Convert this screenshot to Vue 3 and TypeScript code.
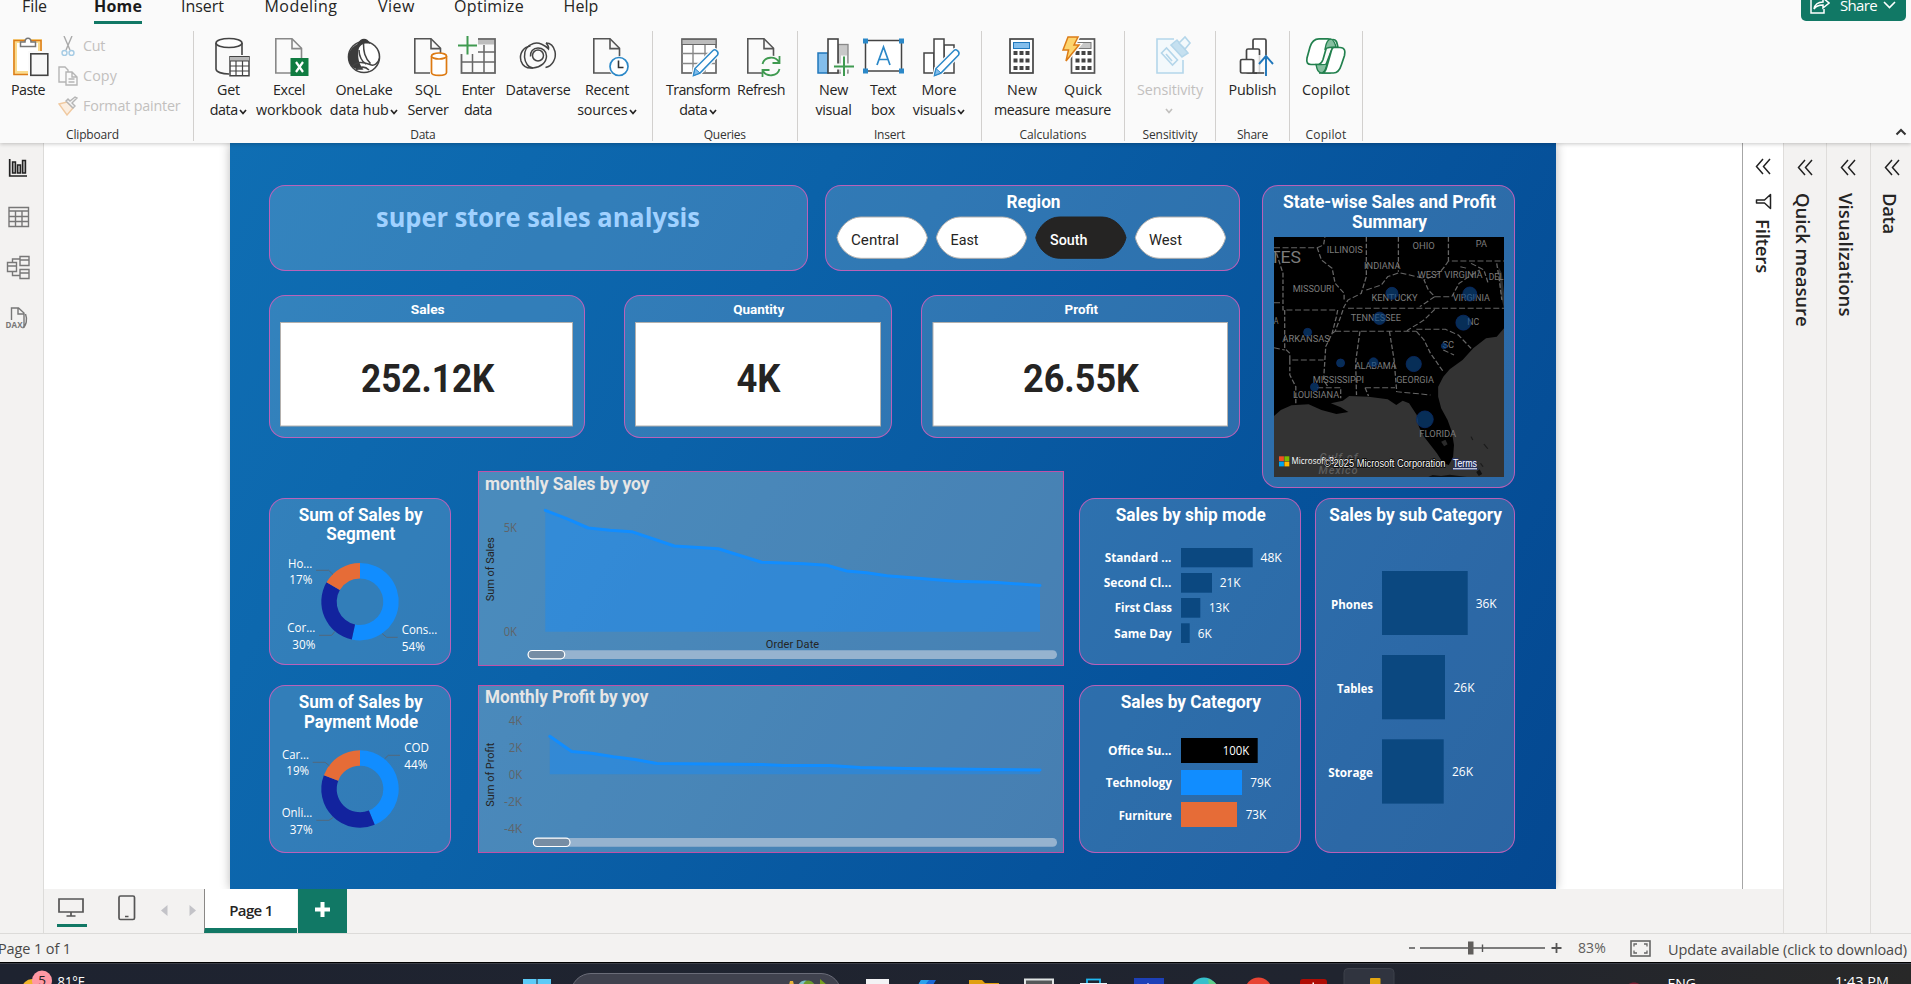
<script setup lang="ts">
import type { Directive } from 'vue'

interface Line { t: string; w: number; chev?: boolean }
interface Tool { icon: string; width: number; lines: Line[]; off?: boolean }
interface Group { name: string; nameW: number; width: number; pad: number; tools: Tool[] }
interface Txt { t: string; x: number; y: number; w: number }

/* Tracks a run of text so that it fills the given length in pixels. */
const vFit: Directive<HTMLElement, number> = {
  mounted(el, binding) {
    const box = el.getBoundingClientRect()
    const vertical = getComputedStyle(el).writingMode.startsWith('vertical')
    const size = vertical ? box.height : box.width
    const n = (el.textContent ?? '').trim().length
    if (n > 0 && size > 0) el.style.letterSpacing = `${((binding.value - size) / n).toFixed(3)}px`
  },
}

const page = '<path d="M6.8 2.8H23l9.5 9.5V37H6.8z" fill="#fafafa" stroke="#555" stroke-width="1.6"/><path d="M23 3v9.6h9.5" fill="none" stroke="#555" stroke-width="1.6"/>'
const pencil = '<path d="M35 14.5c2-2 6.5 1.5 4.5 4.5L22 37l-6.500 2.500 1.500-7z" fill="#fff" stroke="#fafafa" stroke-width="4"/><path d="M35 14.500c2-2 6.500 1.500 4.500 4.500L22 37l-6.500 2.500 1.500-7z" fill="#fff" stroke="#2b88c8" stroke-width="1.5"/><path d="M17 32.500l5 4.500-6.500 2.500z" fill="#83beec" stroke="#2b88c8"/>'
const keys = (x: number) => {
  let s = ''
  for (const dx of [0, 6, 12]) for (const dy of [15, 22.5, 30]) s += `<rect x="${x + dx}" y="${dy}" width="4" height="4" fill="#444"/>`
  return s
}
const icons: Record<string, string> = {
  paste: '<rect x="7" y="5" width="25" height="32" fill="#fff" stroke="#fadb8e" stroke-width="4"/><rect x="6" y="4.500" width="27" height="34" fill="none" stroke="#dc7c18" stroke-width="1.500"/><path d="M12.500 10.500V6H17c0-5 6-5 6 0h4.500v4.500z" fill="#fff" stroke="#777" stroke-width="1.500"/><rect x="20" y="15" width="22" height="26" fill="#fafafa"/><rect x="22.800" y="17.800" width="17" height="21.500" fill="#f8f8f8" stroke="#444" stroke-width="1.600"/>',
  getdata: '<path d="M7 7v26c0 3 6 5 13 5M33 7v12" fill="none" stroke="#444" stroke-width="1.600"/><ellipse cx="20" cy="7" rx="13" ry="4.500" fill="#fff" stroke="#444" stroke-width="1.600"/><path d="M21 20.800h19v19H21z" fill="#fff" stroke="#444" stroke-width="1.500"/><path d="M21 21h19v4H21z" fill="#b8b8b8"/><path d="M21 25h19M21 30h19M21 35h19M27 25v15M33.500 25v15" stroke="#444" stroke-width="1.200"/>',
  excel: page.split('#555').join('#888') + '<rect x="21.500" y="22" width="18" height="18" fill="#107c41"/><path d="M27 26l7 10M34 26l-7 10" stroke="#fff" stroke-width="2.200"/>',
  onelake: '<circle cx="20" cy="21" r="15.500" fill="#fff" stroke="#444" stroke-width="1.600"/><path d="M13.500 8c3-7 10-7 13 0-7-1.500-11 1-12 6-1 6 0 14 5 19.500-6 1-11-1-14-6.500-3-7 0-15 8-19z" fill="#3c3c3c"/><path d="M19.500 7.500c0 8 1 14 7 20M8 30.500c5-5 10-5 18-2 4 2 8-1 9.500-6M15 14c0 6 3 12 7 14M12 34c5-4 9-4 13 0" fill="none" stroke="#444" stroke-width="1.500"/>',
  sql: page + '<path d="M22 18h18v24H22z" fill="#fafafa"/><path d="M23.500 20v16.500c0 3.800 15 3.800 15 0V20" fill="#fff" stroke="#dd7a12" stroke-width="1.700"/><ellipse cx="31" cy="20" rx="7.500" ry="3" fill="#fff" stroke="#dd7a12" stroke-width="1.700"/>',
  enter: '<rect x="3.500" y="3" width="33.500" height="34" fill="#fafafa" stroke="#666" stroke-width="1.800"/><rect x="12" y="4" width="24" height="4.500" fill="#bdbdbd"/><path d="M3.500 16h34M3.500 26h34M14.500 14v23M26 9v28" stroke="#666" stroke-width="1.500"/><path d="M-1-1h21v19H-1z" fill="#fafafa"/><path d="M9.500 0v18.500M0 9.500h19" stroke="#3f9a50" stroke-width="2"/>',
  dataverse: '<g fill="none" stroke="#444" stroke-width="1.500"><path d="M12.500 10C5 11 1 18 3 25c2 6 7 7.500 12 7 8-1 13.500-5.500 13.500-12 0-5-4-8-8.500-8-5 0-8 4-7.500 8.500"/><path d="M27.500 31.500c7-1.500 11-9 9.500-16-1.500-6-5-8.500-9-8.500"/><path d="M28 7c2 2 3 4 2.500 6C27 9 21 6 15.500 7.500 9 9.500 6 15 6.500 21c.5 6 4 11 8.500 11"/><circle cx="20" cy="19.500" r="5.500"/></g>',
  recent: page + '<circle cx="32" cy="30.500" r="10.500" fill="#fafafa"/><circle cx="32" cy="30.500" r="9" fill="#fff" stroke="#2b88c8" stroke-width="1.700"/><path d="M31.500 24.500v7h5" fill="none" stroke="#333" stroke-width="1.600"/>',
  transform: '<rect x="4" y="3" width="34" height="34" fill="#fff" stroke="#666" stroke-width="1.700"/><rect x="4" y="3.500" width="34" height="5" fill="#bdbdbd" stroke="#666"/><path d="M4 17.500h34M4 27.500h34M15 9v28M27 9v28" stroke="#888" stroke-width="1.400"/>' + pencil,
  refresh: page + '<circle cx="30" cy="30.500" r="11" fill="#fafafa"/><path d="M21.500 28c2-8 13-8 16.500-2M38.500 20v7h-7M38.500 33c-2 8-13 8-16.500 2M21.500 41v-7h7" fill="none" stroke="#3f9a50" stroke-width="1.800"/>',
  newvisual: '<rect x="4" y="17" width="10" height="20" fill="#83beec" stroke="#2077bb" stroke-width="1.500"/><rect x="24" y="8.500" width="10" height="28.500" fill="#c8c8c8" stroke="#888" stroke-width="1.300"/><rect x="14" y="3" width="10" height="34" fill="#fff" stroke="#444" stroke-width="1.600"/><path d="M27 19.500h6v8h8v6h-8v8h-6v-8h-8v-6h8z" fill="#fafafa"/><path d="M30 20.500V40M20 30.500h20" stroke="#3f9a50" stroke-width="2"/>',
  textbox: '<rect x="2.500" y="4.500" width="36" height="30.500" fill="#fff" stroke="#444" stroke-width="1.500"/><path d="M0 2.500h5v5H0zM36 2.500h5v5h-5zM0 32.500h5v5H0zM36 32.500h5v5h-5z" fill="#2b88c8"/><path d="M14 29l6.500-18L27 29M16 23.500h9" fill="none" stroke="#2b88c8" stroke-width="1.700"/>',
  morevisuals: '<rect x="5" y="17" width="10" height="20" fill="#fff" stroke="#444" stroke-width="1.500"/><rect x="25" y="9" width="10" height="28" fill="#fff" stroke="#444" stroke-width="1.500"/><rect x="15" y="3" width="10" height="34" fill="#fff" stroke="#444" stroke-width="1.500"/>' + pencil,
  newmeasure: '<rect x="8" y="3" width="23" height="34" fill="#fff" stroke="#444" stroke-width="1.700"/><rect x="11.500" y="6.500" width="16" height="6" fill="#83beec" stroke="#2077bb"/>' + keys(11.5),
  quickmeasure: '<rect x="8.500" y="3" width="23" height="34" fill="#fff" stroke="#555" stroke-width="1.700"/><rect x="12" y="6.500" width="16" height="6" fill="#c8c8c8" stroke="#777"/>' + keys(12.5) + '<path d="M5 1h10l-4 8h5L3 25l2.500-11H0z" fill="#fdd56f" stroke="#fafafa" stroke-width="4"/><path d="M5 1h10l-4 8h5L3 25l2.500-11H0z" fill="#fdd56f" stroke="#dc7c18" stroke-width="1.500"/>',
  sensitivity: '<g stroke="#b4d6ea" stroke-width="1.600" fill="#f3f9fc"><path d="M24 3H7v34h26V24"/><path d="M11.500 17l5-5 11 12-5 5z"/><path d="M16 18l6 7"/><path d="M21 9l6-5 11 13-6 4z" fill="#c5e0f0"/><path d="M29 7l6-6 5 6-5 6z"/></g>',
  publish: '<g fill="#fff" stroke="#444" stroke-width="1.700"><rect x="20" y="3" width="13" height="34" rx="1.500"/><rect x="13.500" y="13" width="13" height="24" rx="1.500"/><rect x="7.500" y="23.500" width="13" height="13.500" rx="1.500"/></g><path d="M24 19h18v22H24z" fill="#fafafa" opacity=".8"/><path d="M20.500 37H31M20.500 23.500V37" stroke="#444" stroke-width="1.700"/><path d="M33 40V20.500M26 28l7-8 7 8" fill="none" stroke="#2077bb" stroke-width="1.900"/>',
  copilot: '<path d="M20 28.500c-1.500 6-4 8.500-7 8.500 4 0 6 0 11 0 4-1 5-5 6-9l4-13-8-2z" fill="#fff" stroke="#22804e" stroke-width="1.600"/><path d="M28 11.500C27 6 25 2.800 22 2.800H13C8 2.800 5.500 6 4 11L1 22c-1 5 1 6.500 4 6.500h6c4 0 5-2 6-5l4-14c1-4 3-6 6-6 4 0 4 4 5 8z" fill="#fff" stroke="#22804e" stroke-width="1.700"/><path d="M19 13c1-6 3-10 6-10 3 1 4 4 5 8-5 0-8 0-11 2zM10 28.500c1 5 2 8.500 6 8.500 3-1 4-4 5-9-3 1-8 .5-11 .5z" fill="#86bfa0" stroke="#22804e" stroke-width="1.300"/><path d="M28 11.500h6c5 0 5.500 4 4.500 8l-3 9c-1.500 5-4 8.500-8 8.500H16c3 0 4-3 5-7l4-14c.8-3 1.500-4.500 3-4.500z" fill="#fff" stroke="#22804e" stroke-width="1.700"/>',
}

const menu: { t: string; w: number; gap: number }[] = [
  { t: 'File', w: 25, gap: 22 }, { t: 'Home', w: 48, gap: 47 }, { t: 'Insert', w: 43, gap: 39 },
  { t: 'Modeling', w: 73, gap: 40.5 }, { t: 'View', w: 37, gap: 40.5 }, { t: 'Optimize', w: 70, gap: 39 }, { t: 'Help', w: 35, gap: 39.5 },
]

const groups: Group[] = [
  { name: 'Data', nameW: 25, width: 458.5, pad: 7, tools: [
    { icon: 'getdata', width: 55, lines: [{ t: 'Get', w: 23 }, { t: 'data', w: 28, chev: true }] },
    { icon: 'excel', width: 66, lines: [{ t: 'Excel', w: 32 }, { t: 'workbook', w: 66 }] },
    { icon: 'onelake', width: 84, lines: [{ t: 'OneLake', w: 57 }, { t: 'data hub', w: 59, chev: true }] },
    { icon: 'sql', width: 44, lines: [{ t: 'SQL', w: 26 }, { t: 'Server', w: 41 }] },
    { icon: 'enter', width: 56, lines: [{ t: 'Enter', w: 33 }, { t: 'data', w: 28 }] },
    { icon: 'dataverse', width: 64, lines: [{ t: 'Dataverse', w: 65 }] },
    { icon: 'recent', width: 74, lines: [{ t: 'Recent', w: 44 }, { t: 'sources', w: 50, chev: true }] },
  ] },
  { name: 'Queries', nameW: 42, width: 145.5, pad: 10.5, tools: [
    { icon: 'transform', width: 70, lines: [{ t: 'Transform', w: 64 }, { t: 'data', w: 28, chev: true }] },
    { icon: 'refresh', width: 56, lines: [{ t: 'Refresh', w: 48 }] },
  ] },
  { name: 'Insert', nameW: 31, width: 184, pad: 10, tools: [
    { icon: 'newvisual', width: 51, lines: [{ t: 'New', w: 29 }, { t: 'visual', w: 36 }] },
    { icon: 'textbox', width: 48, lines: [{ t: 'Text', w: 26 }, { t: 'box', w: 24 }] },
    { icon: 'morevisuals', width: 64, lines: [{ t: 'More', w: 35 }, { t: 'visuals', w: 43, chev: true }] },
  ] },
  { name: 'Calculations', nameW: 67, width: 143, pad: 9, tools: [
    { icon: 'newmeasure', width: 62, lines: [{ t: 'New', w: 30 }, { t: 'measure', w: 56 }] },
    { icon: 'quickmeasure', width: 60, lines: [{ t: 'Quick', w: 38 }, { t: 'measure', w: 56 }] },
  ] },
  { name: 'Sensitivity', nameW: 55, width: 91, pad: 10, tools: [
    { icon: 'sensitivity', width: 70, off: true, lines: [{ t: 'Sensitivity', w: 66 }, { t: '', w: 0, chev: true }] },
  ] },
  { name: 'Share', nameW: 31, width: 74, pad: 6.5, tools: [{ icon: 'publish', width: 60, lines: [{ t: 'Publish', w: 48 }] }] },
  { name: 'Copilot', nameW: 41, width: 73, pad: 5.5, tools: [{ icon: 'copilot', width: 61, lines: [{ t: 'Copilot', w: 48 }] }] },
]

const regions = [
  { t: 'Central', x: 837, tx: 851, w: 48, on: false },
  { t: 'East', x: 936.3, tx: 950.5, w: 28, on: false },
  { t: 'South', x: 1035.7, tx: 1050, w: 37.5, on: true },
  { t: 'West', x: 1135.3, tx: 1149, w: 33, on: false },
]

const kpis = [
  { cls: 'k-sales', vb: '270 296 314 141', t: 'Sales', tx: 410.7, tw: 34, bx: 280, bw: 293, v: '252.12K', vx: 361, vw: 133.5 },
  { cls: 'k-qty', vb: '625 296 266 141', t: 'Quantity', tx: 733.2, tw: 51, bx: 635, bw: 246, v: '4K', vx: 736.5, vw: 44 },
  { cls: 'k-profit', vb: '922 296 317 141', t: 'Profit', tx: 1064.6, tw: 33.5, bx: 932.5, bw: 295.5, v: '26.55K', vx: 1023, vw: 116 },
]

function arc(cy: number, a0: number, a1: number): string {
  const cx = 360, R = 38.7, r = 23.3
  const p = (rad: number, a: number) => {
    const t = (a * Math.PI) / 180
    return `${(cx + rad * Math.sin(t)).toFixed(2)} ${(cy - rad * Math.cos(t)).toFixed(2)}`
  }
  const big = a1 - a0 > 180 ? 1 : 0
  return `M${p(R, a0)}A${R} ${R} 0 ${big} 1 ${p(R, a1)}L${p(r, a1)}A${r} ${r} 0 ${big} 0 ${p(r, a0)}Z`
}
interface Donut { id: string; vb: string; cy: number; cuts: number[]; title: Txt[]; labels: Txt[]; leaders: string }
const donuts: Donut[] = [
  { id: 'segment', vb: '270 499 180 165', cy: 601.7, cuts: [0, 192.3, 300, 360],
    title: [{ t: 'Sum of Sales by', x: 298.7, y: 520.5, w: 124 }, { t: 'Segment', x: 326.3, y: 540.2, w: 69 }],
    labels: [
      { t: 'Ho...', x: 288, y: 568, w: 24.3 }, { t: '17%', x: 289.3, y: 584, w: 23 },
      { t: 'Cor...', x: 287.3, y: 632.3, w: 28 }, { t: '30%', x: 292.3, y: 649, w: 23 },
      { t: 'Cons...', x: 401.7, y: 634.3, w: 35.6 }, { t: '54%', x: 401.7, y: 651, w: 23.3 },
    ],
    leaders: 'M316 570.3H328.7L333 574.5M319 635.3H331.7L335 631.3M397.7 637.3H386.7L382.3 633.7' },
  { id: 'payment', vb: '270 686 180 166', cy: 789, cuts: [0, 157.6, 291, 360],
    title: [{ t: 'Sum of Sales by', x: 298.7, y: 708, w: 124 }, { t: 'Payment Mode', x: 304, y: 728.2, w: 114 }],
    labels: [
      { t: 'Car...', x: 282, y: 759.3, w: 27 }, { t: '19%', x: 286.3, y: 775, w: 22.7 },
      { t: 'Onli...', x: 281.7, y: 817, w: 30.6 }, { t: '37%', x: 289.7, y: 833.7, w: 23 },
      { t: 'COD', x: 404.3, y: 752, w: 24.7 }, { t: '44%', x: 404.3, y: 769, w: 23 },
    ],
    leaders: 'M312.7 762.3H325L329.3 765.7M316.3 820.3H329L333.3 817.3M400 755.3H388.3L384.7 758.7' },
]
const slices = ['#118dff', '#12239e', '#e66c37']

const salesLine = '545.3,510.3 566.7,518.7 588.3,528 610,530.3 631.7,531.7 674.3,546 718.3,548.7 761.7,562.3 804,563.8 826.7,565.2 846.7,571 866.7,572.7 886.7,575.7 955,581.3 993.3,582.3 1040,585.5'
const profitLine = '549.8,736.3 571.7,751.5 591.7,753.3 613.3,756.7 635,759.5 657,763.5 761.7,764.5 783.3,765.4 830,765.6 860,767.5 906.7,768.5 993,769.6 1040,770'
const charts = [
  { id: 'c1', vb: '479 472 584 193', title: { t: 'monthly Sales by yoy', x: 485, y: 489.7, w: 164.5 }, axis: 'Sum of Sales', ay: 601.3,
    ticks: [{ t: '5K', x: 503.7, y: 532, w: 13.3 }, { t: '0K', x: 503.7, y: 636, w: 13.3 }], line: salesLine, base: 631.7, x0: 545.3, sy: 650.3, sx: 527.7 },
  { id: 'c2', vb: '479 686 584 166', title: { t: 'Monthly Profit by yoy', x: 485, y: 703.4, w: 163.5 }, axis: 'Sum of Profit', ay: 806.7,
    ticks: [{ t: '4K', x: 508.7, y: 725, w: 13.5 }, { t: '2K', x: 508.7, y: 752, w: 13.5 }, { t: '0K', x: 508.7, y: 779, w: 13.5 }, { t: '-2K', x: 504, y: 806, w: 18.3 }, { t: '-4K', x: 504, y: 833, w: 18.3 }],
    line: profitLine, base: 774.3, x0: 549.8, sy: 838, sx: 533 },
]

interface Bar { l: string; lx: number; lw: number; ly: number; x: number; y: number; w: number; h: number; c: string; v: string; vx: number; vw: number; vy: number }
const navy = '#0b4880'
const barCards: { id: string; vb: string; title: Txt; bars: Bar[] }[] = [
  { id: 'ship', vb: '1080 499 220 165', title: { t: 'Sales by ship mode', x: 1115.7, y: 520.5, w: 150 }, bars: [
    { l: 'Standard ...', lx: 1104.7, lw: 66.7, ly: 562.3, x: 1181, y: 548, w: 71.7, h: 19.3, c: navy, v: '48K', vx: 1260.5, vw: 21.3, vy: 562 },
    { l: 'Second Cl...', lx: 1103.7, lw: 67.7, ly: 587.2, x: 1181, y: 573, w: 31, h: 19.7, c: navy, v: '21K', vx: 1219.7, vw: 21, vy: 587 },
    { l: 'First Class', lx: 1114.7, lw: 57.3, ly: 612.3, x: 1181, y: 598, w: 19.3, h: 19.7, c: navy, v: '13K', vx: 1209, vw: 20.3, vy: 612 },
    { l: 'Same Day', lx: 1114.3, lw: 57.5, ly: 638.2, x: 1181, y: 623.3, w: 8.7, h: 19.7, c: navy, v: '6K', vx: 1197.7, vw: 14, vy: 638 },
  ] },
  { id: 'category', vb: '1080 686 220 166', title: { t: 'Sales by Category', x: 1120.7, y: 708, w: 140.3 }, bars: [
    { l: 'Office Su...', lx: 1108, lw: 63.5, ly: 755, x: 1181, y: 738, w: 76.7, h: 25, c: '#000', v: '100K', vx: 1222.7, vw: 26.5, vy: 755 },
    { l: 'Technology', lx: 1105.7, lw: 66.3, ly: 787.3, x: 1181, y: 770, w: 61, h: 25, c: '#118dff', v: '79K', vx: 1250.3, vw: 20.7, vy: 787 },
    { l: 'Furniture', lx: 1118.7, lw: 53.3, ly: 820, x: 1181, y: 802, w: 56, h: 25, c: '#e66c37', v: '73K', vx: 1245.7, vw: 20.5, vy: 819.3 },
  ] },
]
const subCard = { id: 'sub', vb: '1316 499 198 353', title: { t: 'Sales by sub Category', x: 1329.3, y: 520.5, w: 172.7 }, bars: [
  { l: 'Phones', lx: 1331, lw: 42, ly: 609.3, x: 1382, y: 571, w: 85.7, h: 64, c: navy, v: '36K', vx: 1475.7, vw: 21, vy: 608.3 },
  { l: 'Tables', lx: 1337, lw: 36, ly: 693.3, x: 1382, y: 655, w: 63, h: 64.3, c: navy, v: '26K', vx: 1453.5, vw: 21, vy: 692.3 },
  { l: 'Storage', lx: 1328.3, lw: 44.7, ly: 777.3, x: 1382, y: 739.3, w: 61.7, h: 64.3, c: navy, v: '26K', vx: 1452, vw: 21, vy: 776.3 },
] as Bar[] }

/* Map geometry is kept in its own grid and projected onto the canvas. */
const mx = (x: number) => 1240 + x / 2.3368
const my = (y: number) => 120 + y / 3
const states: [string, number, number, number][] = [
  ['ILLINOIS', 203, 287, 399], ['OHIO', 403, 455, 387], ['PA', 551, 577, 381], ['INDIANA', 290, 375, 448],
  ['WEST VIRGINIA', 415, 567, 473], ['DEL', 581, 616, 479], ['MISSOURI', 123, 220, 517], ['KENTUCKY', 307, 415, 542],
  ['VIRGINIA', 497, 584, 542], ['TENNESSEE', 259, 376, 604], ['NC', 531, 559, 616], ['A', 79, 90, 612],
  ['ARKANSAS', 99, 210, 667], ['SC', 473, 500, 685], ['ALABAMA', 268, 366, 746], ['MISSISSIPPI', 170, 290, 790],
  ['GEORGIA', 365, 453, 790], ['LOUISIANA', 124, 232, 834], ['FLORIDA', 419, 505, 951],
]
const bubbles: [number, number, number][] = [
  [355, 520, 6], [537, 522, 7], [326, 595, 6.2], [522, 608, 7.5], [158, 637, 4], [477, 678, 2.8],
  [235, 729, 4], [312, 727, 4.5], [406, 732, 7.6], [174, 801, 4], [432, 898, 8.4],
]
const ocean = 'M617 625L600 650 575 655 545 685 520 720 490 748 475 770 463 800 463 830 470 865 485 900 495 935 500 975 498 1010 488 1035 475 1030 460 1000 445 975 430 950 418 920 413 885 395 850 380 842 365 855 345 838 300 830 255 828 240 842 212 850 235 862 253 876 225 882 190 870 160 853 120 856 95 870 79 888V1071H617Z'
const stateLines = 'M79 383H180L195 375 198 351M180 383L190 420 215 445 222 490 243 520 243 540M85 400L100 460V570H228L225 590 215 640 200 680 195 780 205 800M79 548H100M104 570V685L116 700V720H195M116 720V765L130 800V850M79 683L104 690M295 351V470L283 520 252 540 243 560 235 590 222 634 215 640M295 510L330 495 345 470 372 458 430 475M370 351V455M487 351V423H617M487 423L478 440 465 460 430 480 440 510 455 530 420 560M252 565H617M222 634H412M455 568L430 600 390 632M280 634L270 725 272 825M349 634L360 720 366 815 445 825M412 634L430 660 445 700 475 755M412 628H480L510 645 540 685M292 803H362M180 803H235V835M292 803L300 828M455 530L495 530 512 490 535 470 560 450M515 440L530 445M540 430L570 450 580 490M600 430L605 470 612 540M475 690L500 705'

const panes = [
  { t: 'Quick measure', w: 133.5, cls: 'pane-a' },
  { t: 'Visualizations', w: 123.5, cls: 'pane-b' },
  { t: 'Data', w: 41, cls: 'pane-c' },
]
</script>

<template>
  <div class="app">
    <header class="ribbon">
      <nav class="menu">
        <span v-for="m in menu" :key="m.t" class="menu-item" :class="{ active: m.t === 'Home' }" :style="{ width: m.w + 'px', marginLeft: m.gap + 'px' }"><span v-fit="m.w">{{ m.t }}</span></span>
        <button class="share">
          <svg width="20" height="18" viewBox="0 0 20 18"><path d="M1 4v13h13v-4M4 13c1-5 5-7 9-7V2l6 5-6 5V9c-4 0-7 1-9 4z" fill="none" stroke="#fff" stroke-width="1.5" /></svg>
          <span v-fit="37">Share</span>
          <svg width="13" height="8" viewBox="0 0 13 8"><path d="M1 1l5.500 5.500L12 1" fill="none" stroke="#fff" stroke-width="1.6" /></svg>
        </button>
      </nav>
      <div class="groups">
        <section class="group clip">
          <div class="tools">
            <div class="tool paste">
              <svg class="ico" viewBox="0 0 40 40" v-html="icons.paste"></svg>
              <span class="line"><span v-fit="34">Paste</span></span>
            </div>
            <div class="clip-list">
              <div class="clip-row">
                <svg width="20" height="20" viewBox="0 0 20 20" fill="none" stroke-width="1.4"><path d="M6 0l6 14M14 0L8 14" stroke="#aaa" /><circle cx="6.5" cy="17" r="2.5" stroke="#a5cbe4" /><circle cx="13.5" cy="17" r="2.5" stroke="#a5cbe4" /></svg>
                <span v-fit="22">Cut</span>
              </div>
              <div class="clip-row">
                <svg width="20" height="20" viewBox="0 0 20 20" fill="#fafafa" stroke="#b5b5b5" stroke-width="1.4"><path d="M8 16H1V1h6l3 3v2" /><path d="M8 6h6l5 5v8H8zM14 6v5h5M10.500 13h6M10.500 16h6" /></svg>
                <span v-fit="34">Copy</span>
              </div>
              <div class="clip-row">
                <svg width="20" height="20" viewBox="0 0 20 20" stroke-width="1.4"><path d="M1 8l8-2 6 6-6 7z" fill="#fbeee0" stroke="#f0c9a0" /><path d="M8 5l7 7 2-2-3-3 5-5-2-1-5 4-2-2z" fill="#f4f4f4" stroke="#b5b5b5" /></svg>
                <span v-fit="97.5">Format painter</span>
              </div>
            </div>
          </div>
          <div class="group-name"><span v-fit="53">Clipboard</span></div>
        </section>
        <section v-for="g in groups" :key="g.name" class="group" :style="{ width: g.width + 'px' }">
          <div class="tools" :style="{ paddingLeft: g.pad + 'px' }">
            <div v-for="t in g.tools" :key="t.icon" class="tool" :class="{ off: t.off }" :style="{ width: t.width + 'px' }">
              <svg class="ico" viewBox="0 0 40 40" v-html="icons[t.icon]"></svg>
              <span v-for="l in t.lines" :key="l.t" class="line">
                <span v-if="l.t" v-fit="l.w">{{ l.t }}</span>
                <svg v-if="l.chev" class="chev" :class="{ solo: !l.t }" viewBox="0 0 8 6"><path d="M1 1l3 3.500L7 1" fill="none" stroke="currentColor" stroke-width="1.7" /></svg>
              </span>
            </div>
          </div>
          <div class="group-name"><span v-fit="g.nameW">{{ g.name }}</span></div>
        </section>
        <svg class="collapse" viewBox="0 0 12 8"><path d="M1.500 6.500L6 2l4.500 4.500" fill="none" stroke="#333" stroke-width="2" /></svg>
      </div>
    </header>

    <div class="body">
      <aside class="rail">
        <svg viewBox="0 0 44 200" width="44" height="200" fill="none" stroke="#777" stroke-width="1.4">
          <g stroke="#222"><path d="M9.700 16v17H27" stroke-width="1.7" /><path d="M12.500 19h3v11h-3zM17.500 22h3v8h-3zM22.500 17.500h3V30h-3z" fill="#aaa" /></g>
          <path d="M9 64.500h19.500v19H9zM9 68h19.500M9 73.500h19.500M9 78.500h19.500M15.500 68v15.500M22 68v15.500" />
          <path d="M20 113.500h9v9h-9zM20 117h9M7.500 119.500h9v9h-9zM7.500 123h9M20 126.500h9v9h-9zM20 130h9M12.500 119v-3H20M12.500 129v3.500H20" />
          <path d="M11.500 177v-12h7l5.500 5v15M18 165v6h6M25.500 171c2 5 1 12-3 14" />
          <text x="5.5" y="184.5" font-size="8" font-weight="700" fill="#777" stroke="none" textLength="17" font-family="Open Sans, sans-serif">DAX</text>
        </svg>
      </aside>

      <div class="center">
        <div class="stage-row">
          <div class="stage">
            <main class="canvas">
              <div class="top">
                <div class="top-left">
                  <div class="row">
                    <div class="card k-title"><svg viewBox="270 186 537 84"><text class="seg b" x="376" y="226.7" font-size="27" fill="#a0d1ff" textLength="324" lengthAdjust="spacingAndGlyphs">super store sales analysis</text></svg></div>
                    <div class="card k-region">
                      <svg viewBox="826 186 413 84">
                        <text class="din b" x="1006.5" y="208.3" font-size="18" fill="#fff" textLength="54" lengthAdjust="spacingAndGlyphs">Region</text>
                        <g v-for="r in regions" :key="r.t">
                          <path :transform="`translate(${r.x} 217)`" d="M24 0H66C78 0 88 10 90.300 20.700 88 31.500 78 41.300 66 41.300H24C12 41.300 2.500 31.500 0 20.700 2.500 10 12 0 24 0Z" :fill="r.on ? '#252423' : '#fff'" :stroke="r.on ? '#252423' : '#b3b0ad'" />
                          <text class="din" :x="r.tx" y="244.8" font-size="15" :font-weight="r.on ? 500 : 400" :fill="r.on ? '#fff' : '#252423'" :textLength="r.w" lengthAdjust="spacingAndGlyphs">{{ r.t }}</text>
                        </g>
                      </svg>
                    </div>
                  </div>
                  <div class="row">
                    <div v-for="k in kpis" :key="k.t" class="card" :class="k.cls">
                      <svg :viewBox="k.vb">
                        <text class="din b" :x="k.tx" y="314.2" font-size="13.5" fill="#fff" :textLength="k.tw" lengthAdjust="spacingAndGlyphs">{{ k.t }}</text>
                        <rect :x="k.bx + 0.5" y="322.5" :width="k.bw - 1" height="103.5" fill="#fff" stroke="#b3b0ad" />
                        <text class="din b" :x="k.vx" y="392.4" font-size="39.5" fill="#252423" :textLength="k.vw" lengthAdjust="spacingAndGlyphs">{{ k.v }}</text>
                      </svg>
                    </div>
                  </div>
                </div>
                <div class="card k-map">
                  <svg viewBox="1263 186 251 301">
                    <g class="din b" font-size="18" fill="#fff">
                      <text x="1283" y="208.3" textLength="213" lengthAdjust="spacingAndGlyphs">State-wise Sales and Profit</text>
                      <text x="1352" y="228.3" textLength="75" lengthAdjust="spacingAndGlyphs">Summary</text>
                    </g>
                    <svg x="1274" y="237" width="230" height="240" viewBox="79 351 538 720" preserveAspectRatio="none">
                      <rect x="79" y="351" width="538" height="720" fill="#000" />
                      <path :d="ocean" fill="#333" />
                      <path d="M604 440l8 20 5 60v45l-6-30-4-50zM470 965l10-6 5 14-8 6z" fill="#2a2a2a" />
                      <path d="M440 1071l10-6 20 3 20-4 40 7zM552 1056l8-8 6 14-8 6z" fill="#111" />
                      <path :d="stateLines" fill="none" stroke="#666" stroke-width="3" stroke-dasharray="14 6" />
                      <path d="M540 950l4 10M570 972l9 14M562 1030l6 10M520 1030l8 6" stroke="#1c1c1c" stroke-width="3" />
                    </svg>
                    <svg x="1274" y="237" width="230" height="240" viewBox="1274 237 230 240">
                      <g class="din" font-size="9.7" fill="#7c7c7c">
                        <text v-for="s in states" :key="s[0]" :x="mx(s[1])" :y="my(s[3])" :textLength="(s[2] - s[1]) / 2.3368" lengthAdjust="spacingAndGlyphs">{{ s[0] }}</text>
                        <text x="1270" y="262.7" font-size="16.5" textLength="31" lengthAdjust="spacingAndGlyphs">TES</text>
                        <g font-style="italic" fill="#5c5c5c" font-weight="500" font-size="11">
                          <text x="1319.5" y="461.3" textLength="38">Gulf of</text>
                          <text x="1318.5" y="473.5" textLength="39">Mexico</text>
                        </g>
                      </g>
                      <circle v-for="(b, i) in bubbles" :key="i" :cx="mx(b[0])" :cy="my(b[1])" :r="b[2]" fill="#0c4a8c" fill-opacity=".62" stroke="#0a2a66" stroke-opacity=".8" />
                      <path d="M1279 456.300h4.900v4.800h-4.900z" fill="#f25022" /><path d="M1284.400 456.300h4.900v4.800h-4.900z" fill="#7fba00" />
                      <path d="M1279 461.600h4.900v4.800h-4.900z" fill="#00a4ef" /><path d="M1284.400 461.600h4.900v4.800h-4.900z" fill="#ffb900" />
                      <text class="seg" x="1291.5" y="464.3" font-size="9.5" fill="#fff" textLength="54" lengthAdjust="spacingAndGlyphs">Microsoft Bing</text>
                      <g class="lib" font-size="10" fill="#fff" stroke="#000" stroke-width="1.4" paint-order="stroke">
                        <text x="1324" y="467.3" textLength="121.5" lengthAdjust="spacingAndGlyphs">© 2025 Microsoft Corporation</text>
                        <text x="1453" y="467.3" stroke="#20306a" textLength="24" lengthAdjust="spacingAndGlyphs" text-decoration="underline">Terms</text>
                      </g>
                    </svg>
                  </svg>
                </div>
              </div>

              <div class="bottom">
                <div class="col donuts">
                  <div v-for="d in donuts" :key="d.id" class="card">
                    <svg :viewBox="d.vb">
                      <text v-for="l in d.title" :key="l.t" class="din b" :x="l.x" :y="l.y" font-size="18" fill="#fff" :textLength="l.w" lengthAdjust="spacingAndGlyphs">{{ l.t }}</text>
                      <path v-for="(c, i) in slices" :key="c" :d="arc(d.cy, d.cuts[i], d.cuts[i + 1])" :fill="c" />
                      <path :d="d.leaders" fill="none" stroke="#52687c" />
                      <text v-for="l in d.labels" :key="l.t" class="seg" :x="l.x" :y="l.y" font-size="12" fill="#fff" :textLength="l.w" lengthAdjust="spacingAndGlyphs">{{ l.t }}</text>
                    </svg>
                  </div>
                </div>
                <div class="col charts">
                  <div v-for="c in charts" :key="c.id" class="card square">
                    <svg :viewBox="c.vb">
                      <text class="din b" :x="c.title.x" :y="c.title.y" font-size="18" fill="#e6e6e6" :textLength="c.title.w" lengthAdjust="spacingAndGlyphs">{{ c.title.t }}</text>
                      <text v-for="t in c.ticks" :key="t.t" class="seg" :x="t.x" :y="t.y" font-size="12" fill="#5f6469" :textLength="t.w" lengthAdjust="spacingAndGlyphs">{{ t.t }}</text>
                      <text class="din" :transform="`translate(494 ${c.ay}) rotate(-90)`" font-size="11" fill="#252423" textLength="64">{{ c.axis }}</text>
                      <polygon :points="`${c.x0},${c.base} ${c.line} 1040,${c.base}`" fill="#118dff" fill-opacity=".4" />
                      <polyline :points="c.line" fill="none" stroke="#118dff" stroke-width="3" stroke-linejoin="round" stroke-linecap="round" />
                      <text v-if="c.id === 'c1'" class="din" x="765.7" y="648" font-size="11" fill="#252423" textLength="53.5">Order Date</text>
                      <rect :x="c.sx" :y="c.sy" :width="1057 - c.sx" height="8.7" rx="4.3" fill="#96b3cf" />
                      <rect :x="c.sx + 0.4" :y="c.sy + 0.2" width="36.6" height="8.3" rx="4" fill="#768da4" stroke="#fff" stroke-width="1.2" />
                    </svg>
                  </div>
                </div>
                <div class="col bars">
                  <div v-for="c in barCards" :key="c.id" class="card">
                    <svg :viewBox="c.vb">
                      <text class="din b" :x="c.title.x" :y="c.title.y" font-size="18" fill="#fff" :textLength="c.title.w" lengthAdjust="spacingAndGlyphs">{{ c.title.t }}</text>
                      <g v-for="b in c.bars" :key="b.l" fill="#fff" font-size="12">
                        <text class="seg b" :x="b.lx" :y="b.ly" :textLength="b.lw" lengthAdjust="spacingAndGlyphs">{{ b.l }}</text>
                        <rect :x="b.x" :y="b.y" :width="b.w" :height="b.h" :fill="b.c" />
                        <text class="seg" :x="b.vx" :y="b.vy" :textLength="b.vw" lengthAdjust="spacingAndGlyphs">{{ b.v }}</text>
                      </g>
                    </svg>
                  </div>
                </div>
                <div class="card sub">
                  <svg :viewBox="subCard.vb">
                    <text class="din b" :x="subCard.title.x" :y="subCard.title.y" font-size="18" fill="#fff" :textLength="subCard.title.w" lengthAdjust="spacingAndGlyphs">{{ subCard.title.t }}</text>
                    <g v-for="b in subCard.bars" :key="b.l" fill="#fff" font-size="12">
                      <text class="seg b" :x="b.lx" :y="b.ly" :textLength="b.lw" lengthAdjust="spacingAndGlyphs">{{ b.l }}</text>
                      <rect :x="b.x" :y="b.y" :width="b.w" :height="b.h" :fill="b.c" />
                      <text class="seg" :x="b.vx" :y="b.vy" :textLength="b.vw" lengthAdjust="spacingAndGlyphs">{{ b.v }}</text>
                    </g>
                  </svg>
                </div>
              </div>
            </main>
          </div>
          <aside class="filters">
            <svg width="17" height="17" viewBox="0 0 17 17"><path d="M8 1L1.500 8.500 8 16M15 1L8.500 8.500 15 16" fill="none" stroke="#222" stroke-width="1.5" /></svg>
            <svg class="funnel" width="17" height="17" viewBox="0 0 17 17"><path d="M15.500 1.500v14L9.500 10H1.500V7h8z" fill="none" stroke="#222" stroke-width="1.5" stroke-linejoin="round" /></svg>
            <span class="vtext" v-fit="54">Filters</span>
          </aside>
        </div>
        <div class="pagebar">
          <div class="view view-desk"><svg width="26" height="19" viewBox="0 0 26 19"><path d="M1 1h24v13H1zM13 14v4M8.500 18h9" fill="none" stroke="#555" stroke-width="1.7" /></svg></div>
          <svg class="phone" width="18" height="26" viewBox="0 0 18 26"><rect x="1" y="1" width="15.5" height="23.5" rx="1.5" fill="none" stroke="#555" stroke-width="1.7" /><path d="M7 21.500h3.500" stroke="#555" stroke-width="1.5" /></svg>
          <svg class="arrows" width="35" height="11" viewBox="0 0 35 11"><path d="M6.500 0v11L0 5.500zM28.500 0v11L35 5.500z" fill="#c3c3c8" /></svg>
          <div class="tab"><span v-fit="43.5">Page 1</span></div>
          <div class="add"><svg width="15" height="15" viewBox="0 0 15 15"><path d="M7.500 0v15M0 7.500h15" stroke="#fff" stroke-width="4" /></svg></div>
        </div>
      </div>

      <aside v-for="p in panes" :key="p.t" class="pane" :class="p.cls">
        <svg width="17" height="17" viewBox="0 0 17 17"><path d="M8 1L1.500 8.500 8 16M15 1L8.500 8.500 15 16" fill="none" stroke="#222" stroke-width="1.5" /></svg>
        <span class="vtext" v-fit="p.w">{{ p.t }}</span>
      </aside>
    </div>

    <footer class="status">
      <span class="pages" v-fit="73">Page 1 of 1</span>
      <svg class="zoomer" width="160" height="28" viewBox="1405 934 160 28"><path d="M1409 948h6M1420 948h125M1482.500 944.500v7.500" stroke="#555" stroke-width="1.4" /><path d="M1551.500 948h10M1556.500 943v10" stroke="#555" stroke-width="1.8" /><rect x="1468" y="941.5" width="5.5" height="13" fill="#605e5c" /></svg>
      <span class="pct" v-fit="28">83%</span>
      <svg class="fit-ico" width="21" height="17" viewBox="0 0 21 17" fill="none" stroke="#666" stroke-width="1.6"><rect x="1" y="1" width="19" height="15" /><path d="M4 6.500V4h3M14 4h3v2.500M17 10.500V13h-3M7 13H4v-2.500" stroke-width="1.3" /></svg>
      <span class="update" v-fit="239">Update available (click to download)</span>
    </footer>

    <footer class="taskbar">
      <svg width="1911" height="22" viewBox="0 962 1911 22">
        <circle cx="32" cy="989" r="10" fill="#f0b42a" />
        <circle cx="42" cy="980.5" r="10" fill="#ff99a4" />
        <text class="seg" x="38.3" y="985.3" font-size="13.5" fill="#202020">5</text>
        <text class="seg" x="57.5" y="986.8" font-size="14" fill="#fff" textLength="27" lengthAdjust="spacingAndGlyphs">81°F</text>
        <path d="M523 979h13.500v6H523zM537.500 979H551v6h-13.500z" fill="#5ccbf8" />
        <rect x="571" y="973.5" width="270" height="40" rx="20" fill="#40424e" stroke="#6a6c78" />
        <path d="M790 981h3l1 4h-5z" fill="#e8b43a" /><path d="M798 985c4-6 10-6 14 0z" fill="#7cc0c8" /><path d="M803 985c2-6 8-6 12 0z" fill="#6b9a30" /><path d="M820 979l7 6h-7z" fill="#76a020" />
        <rect x="866" y="979" width="23" height="8" fill="#f3f3f5" />
        <path d="M921 980h15l-3 5h-15z" fill="#1c68d8" /><path d="M921 980h8l-4 5h-7z" fill="#2aa2ec" />
        <path d="M969 980h13l3 3h14v3h-30z" fill="#e0a010" />
        <rect x="1025" y="979.5" width="28" height="10" fill="#55595a" stroke="#e0e4e4" stroke-width="2" />
        <rect x="1087" y="979.5" width="13" height="8" fill="none" stroke="#20b8f0" stroke-width="1.8" /><rect x="1080" y="983" width="27" height="4" fill="#e8f4fa" />
        <rect x="1134" y="978" width="30" height="8" fill="#1d40b8" /><path d="M1147 983h2v3h-2z" fill="#8aa0e8" />
        <circle cx="1204" cy="991" r="13.5" fill="#36c0cc" /><path d="M1208 979c4 1 7 3 9 6h-8z" fill="#5fd08a" />
        <circle cx="1258.5" cy="991" r="13.5" fill="#e84434" />
        <rect x="1300" y="979" width="27" height="12" rx="3" fill="#b00c04" /><path d="M1312.500 982.500h1.500v3h-1.500z" fill="#fff" />
        <rect x="1344" y="968.5" width="50" height="40" rx="4" fill="#30343f" stroke="#3d414b" />
        <rect x="1370" y="978" width="10.5" height="8" rx="1" fill="#e3a612" />
        <path d="M1629 984c2-2 8-2 10 0z" fill="#7a1f34" />
        <text class="seg" x="1667.5" y="987.5" font-size="13.5" fill="#fff" textLength="28.5" lengthAdjust="spacingAndGlyphs">ENG</text>
        <text class="seg" x="1835" y="987" font-size="14" fill="#fff" textLength="54" lengthAdjust="spacingAndGlyphs">1:43 PM</text>
      </svg>
    </footer>
  </div>
</template>

<style>
html, body { margin: 0; padding: 0; overflow: hidden; }
</style>

<style scoped>
.app { width: 1911px; height: 984px; overflow: hidden; display: flex; flex-direction: column; font-family: 'Open Sans', 'Noto Sans', sans-serif; background: #fff; color: #252423; }
* { box-sizing: border-box; }
svg { display: block; flex: none; }
.seg { font-family: 'Open Sans', 'Noto Sans', sans-serif; }
.din { font-family: Roboto, 'Liberation Sans', sans-serif; }
.lib { font-family: 'Liberation Sans', sans-serif; }
.b { font-weight: 700; }

.ribbon { height: 143px; flex: none; background: #fafafa; position: relative; z-index: 2; box-shadow: 0 1px 4px rgba(0, 0, 0, .22); }
.menu { display: flex; height: 31px; align-items: flex-start; }
.menu-item { font-size: 16px; line-height: 24px; height: 24px; white-space: nowrap; flex: none; display: flex; }
.menu-item > span { margin-top: -6px; line-height: 24px; }
.menu-item.active { font-weight: 700; border-bottom: 3px solid #117865; color: #1b1b1b; }
.share { margin-left: auto; margin-right: 5px; width: 105px; height: 30px; margin-top: -9px; border: 0; border-radius: 0 0 5px 5px; background: #117865; color: #fff; font: 15px 'Open Sans', sans-serif; display: flex; align-items: center; padding: 0 0 3px 9px; }
.share span { margin: 0 6px 0 10px; }

.groups { display: flex; height: 110px; }
.group { height: 110px; border-right: 1px solid #d2d0ce; display: flex; flex-direction: column; padding-top: 5px; flex: none; }
.clip { width: 194px; }
.tools { display: flex; height: 91px; flex: none; }
.tool { display: flex; flex-direction: column; align-items: center; flex: none; }
.tool.paste { width: 56px; }
.ico { width: 40px; height: 40px; overflow: visible; margin-bottom: 4px; }
.line { display: flex; align-items: center; font-size: 14.3px; line-height: 20px; height: 20px; white-space: nowrap; }
.chev { width: 8px; height: 6px; margin: 3px 0 0 1.5px; }
.chev.solo { margin: 1px 2px 0 0; }
.off { color: #c2c0be; }
.group-name { font-size: 12px; line-height: 16px; text-align: center; white-space: nowrap; color: #333; }
.clip .group-name { padding-right: 8px; }
.clip-list { display: flex; flex-direction: column; padding-left: 2px; }
.clip-row { display: flex; align-items: center; height: 20px; margin-bottom: 10px; gap: 5px; font-size: 14.3px; color: #c2c0be; white-space: nowrap; line-height: 20px; }
.collapse { width: 12px; height: 8px; margin: 97px 4px 0 auto; }

.body { height: 790px; flex: none; display: flex; }
.rail { width: 44px; flex: none; background: #f3f2f1; border-right: 1px solid #dcdbd9; }
.center { width: 1739px; flex: none; display: flex; flex-direction: column; }
.stage-row { display: flex; height: 746px; }
.stage { width: 1698px; overflow: hidden; padding-left: 186px; background: #fff; flex: none; }
.canvas { width: 1326px; height: 746px; padding: 42px 41px 36px 39px; background: linear-gradient(120deg, #0f6eb3 0%, #0b62a9 35%, #06539c 70%, #044891 100%); box-shadow: 0 0 10px rgba(0, 0, 0, .28); }
.top { display: flex; justify-content: space-between; height: 286px; align-items: flex-start; }
.top-left { width: 971px; display: flex; flex-direction: column; gap: 24px; }
.row { display: flex; justify-content: space-between; }
.card { background: rgba(255, 255, 255, .155); border: 1px solid rgba(205, 95, 185, .88); border-radius: 16px; overflow: hidden; flex: none; }
.card > svg { width: 100%; height: 100%; }
.k-title { width: 539px; height: 86px; }
.k-region { width: 415px; height: 86px; }
.k-sales { width: 316px; height: 143px; }
.k-qty { width: 268px; height: 143px; margin-left: 10px; }
.k-profit { width: 319px; height: 143px; }
.k-map { width: 253px; height: 303px; }
.bottom { display: flex; align-items: flex-end; height: 382px; }
.col { display: flex; flex-direction: column; flex: none; }
.col .card:last-child { height: 168px; }
.donuts { width: 182px; gap: 20px; margin-right: 27px; }
.charts { width: 586px; gap: 19px; margin-right: 15px; }
.bars { width: 222px; gap: 20px; margin-right: 14px; }
.donuts .card:first-child, .bars .card:first-child { height: 167px; }
.charts .card:first-child { height: 195px; }
.square { border-radius: 0; background: rgba(255, 250, 238, .26); border-color: rgba(205, 75, 165, .9); }
.sub { width: 200px; height: 355px; }

.filters { width: 41px; flex: none; background: #fff; border-left: 1px solid #a6a6a6; padding: 15px 0 0 12px; display: flex; flex-direction: column; align-items: flex-start; }
.funnel { margin-top: 18px; }
.vtext { writing-mode: vertical-rl; font-weight: 600; font-size: 18.5px; line-height: 22px; white-space: nowrap; color: #252423; }
.filters .vtext { margin: 9px 0 0 -3px; }
.pane { width: 43px; flex: none; background: #f3f2f1; border-left: 1px solid #dfdddb; padding: 16px 0 0 13px; display: flex; flex-direction: column; align-items: flex-start; }
.pane .vtext { margin: 17px 0 0 -5px; }
.pane-a { width: 43px; }
.pane-b { width: 44px; }
.pane-c { width: 41px; }

.pagebar { height: 44px; flex: none; display: flex; background: #f3f2f1; }
.view-desk { margin-left: 13px; width: 30px; height: 38px; border-bottom: 3px solid #117865; padding: 9px 0 0 1px; }
.phone { margin: 6px 0 0 31px; }
.arrows { margin: 16px 0 0 25px; }
.tab { width: 93px; margin-left: 8px; background: #fff; border-left: 1px solid #8a8886; border-bottom: 5px solid #117865; text-align: center; font-weight: 600; font-size: 15px; line-height: 43px; height: 44px; white-space: nowrap; }
.add { width: 49px; margin-left: 1px; height: 44px; background: #117865; display: flex; align-items: center; justify-content: center; padding-bottom: 4px; }

.status { height: 29px; flex: none; background: #f3f2f1; border-top: 1px solid #dcdbd9; display: flex; align-items: center; font-size: 14.5px; color: #494847; white-space: nowrap; }
.pages { margin-left: -2px; padding-top: 1px; }
.zoomer { margin-left: auto; }
.pct { margin-left: 13px; color: #605e5c; font-size: 14px; padding-bottom: 2px; }
.fit-ico { margin: 0 17px 0 24px; }
.update { margin-right: 4px; padding-top: 2px; }

.taskbar { height: 22px; flex: none; border-top: 1px solid #000; box-shadow: inset 0 1px 0 #3c3f48; background: linear-gradient(90deg, #1e2330 0%, #20242f 70%, #282828 100%); overflow: hidden; }
.taskbar svg { margin-top: -1px; }
</style>
